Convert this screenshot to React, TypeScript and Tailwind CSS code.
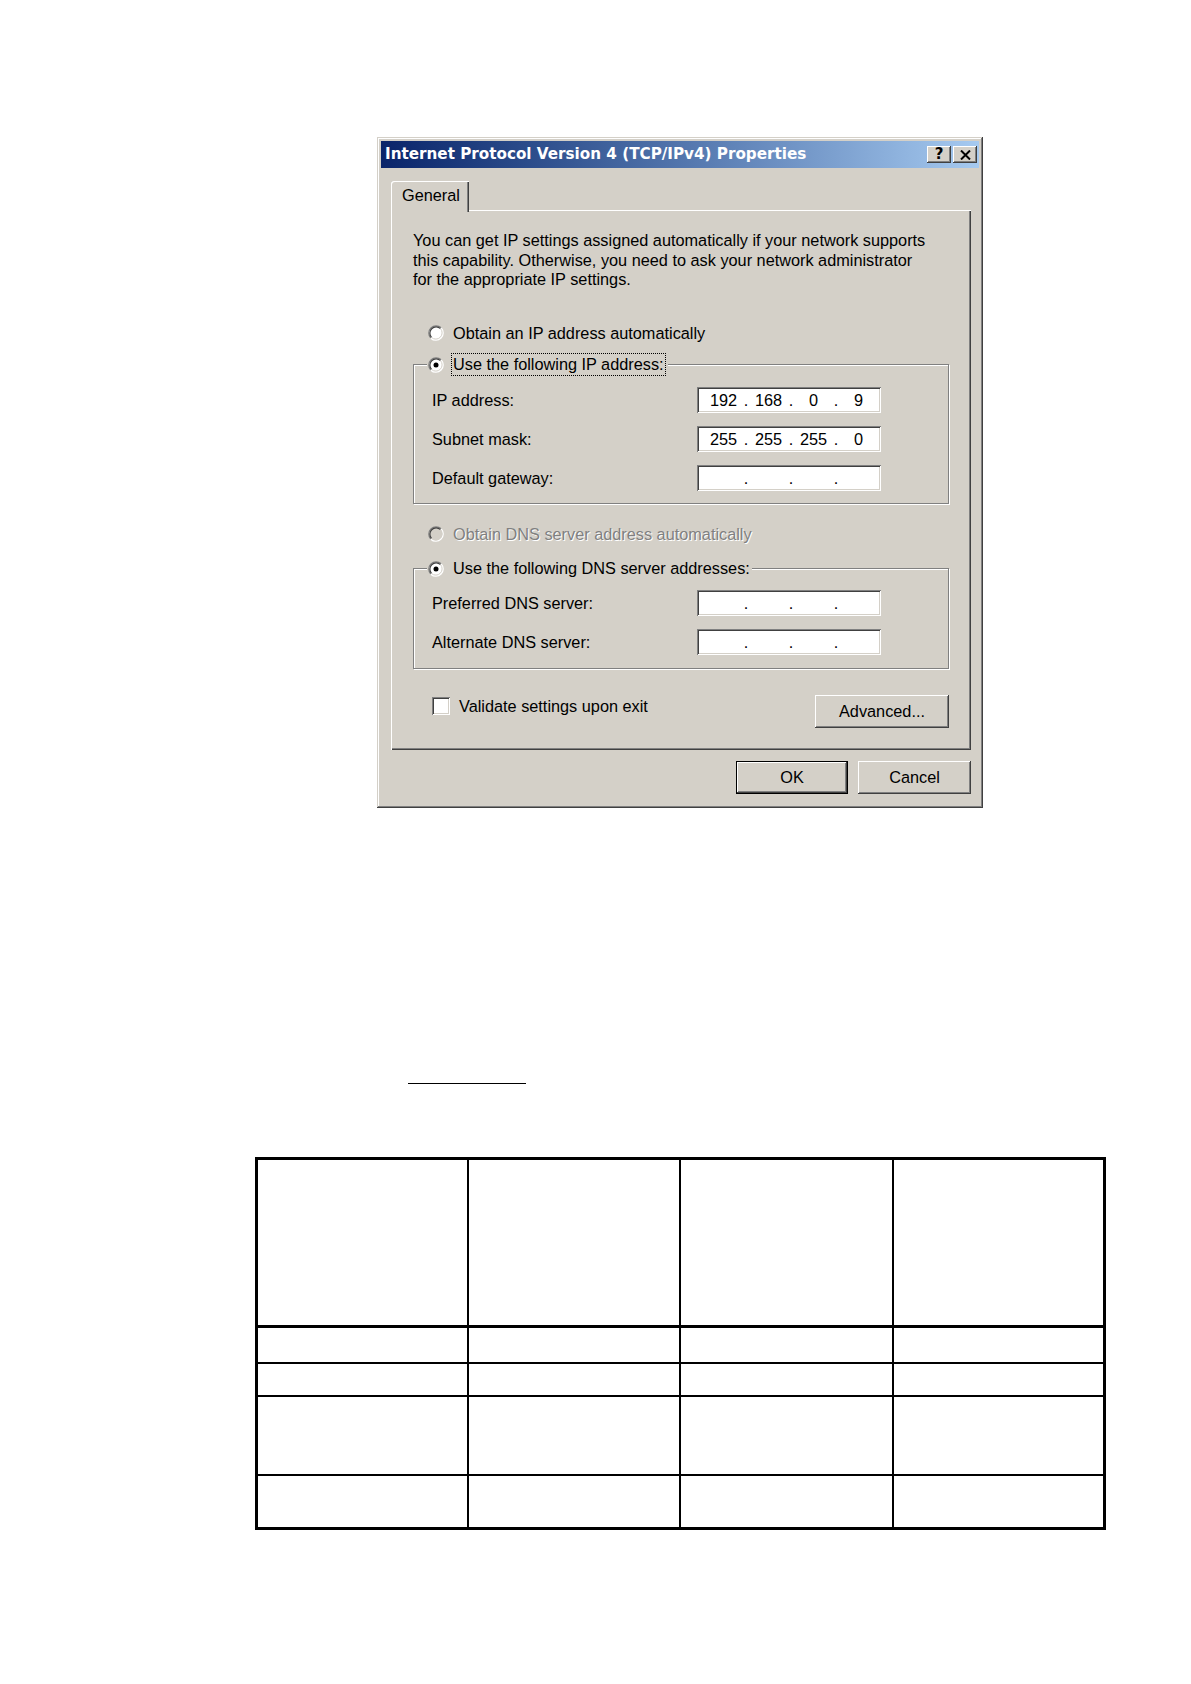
import { Fragment } from "react";

const raised =
  "bg-[#d4d0c8] shadow-[inset_-1px_-1px_#404040,inset_1px_1px_#ffffff,inset_-2px_-2px_#808080,inset_2px_2px_#d4d0c8]";
const sunken =
  "bg-white shadow-[inset_1px_1px_#808080,inset_-1px_-1px_#ffffff,inset_2px_2px_#404040,inset_-2px_-2px_#d4d0c8]";

function Radio({ checked, disabled }: { checked?: boolean; disabled?: boolean }) {
  return (
    <svg width="16" height="16" viewBox="0 0 16 16" className="shrink-0">
      <circle cx="8" cy="8" r="7" fill={disabled ? "#d4d0c8" : "#ffffff"} />
      <path d="M13.16 2.84A7.3 7.3 0 0 0 2.84 13.16" fill="none" stroke="#808080" strokeWidth="1.3" />
      <path d="M12.45 3.55A6.3 6.3 0 0 0 3.55 12.45" fill="none" stroke="#404040" strokeWidth="1.1" />
      <path d="M2.84 13.16A7.3 7.3 0 0 0 13.16 2.84" fill="none" stroke="#ffffff" strokeWidth="1.3" />
      <path d="M3.55 12.45A6.3 6.3 0 0 0 12.45 3.55" fill="none" stroke="#d4d0c8" strokeWidth="1" />
      {checked && <circle cx="8" cy="8" r="2.5" fill="#000000" />}
    </svg>
  );
}

function IpField({ parts }: { parts?: string[] }) {
  const p = parts ?? ["", "", "", ""];
  return (
    <div className={`flex h-[26px] w-[184px] items-center pl-[10px] ${sunken}`}>
      {p.map((v, i) => (
        <Fragment key={i}>
          <span className="w-[33px] text-center">{v}</span>
          {i < 3 && <span className="w-[12px] text-center">.</span>}
        </Fragment>
      ))}
    </div>
  );
}

function FieldRow({ label, parts }: { label: string; parts?: string[] }) {
  return (
    <div className="flex h-[26px] items-center">
      <span className="w-[265px]">{label}</span>
      <IpField parts={parts} />
    </div>
  );
}

function GroupBox({ legend, children, className }: { legend: React.ReactNode; children: React.ReactNode; className: string }) {
  return (
    <div className={`relative border border-[#808080] shadow-[inset_1px_1px_#ffffff,1px_1px_#ffffff] ${className}`}>
      <div className="absolute -top-[12px] left-[13px] flex h-[23px] items-center bg-[#d4d0c8] pl-[1px] pr-[2px]">
        {legend}
      </div>
      {children}
    </div>
  );
}

export default function App() {
  return (
    <div className="h-[1684px] w-[1191px] overflow-hidden bg-white font-['Liberation_Sans',Arial,sans-serif] text-[16.3px] text-black">
      {/* dialog */}
      <div className="ml-[377px] mt-[137px] flex h-[671px] w-[606px] flex-col bg-[#d4d0c8] px-[4px] pt-[4px] shadow-[inset_-1px_-1px_#404040,inset_1px_1px_#d4d0c8,inset_-2px_-2px_#808080,inset_2px_2px_#ffffff]">
        <div className="flex h-[27px] items-center justify-between bg-linear-to-r from-[#0a246a] to-[#a6caf0] pl-[4px] pr-[2px]">
          <span className="font-['DejaVu_Sans',sans-serif] text-[15.2px] font-bold text-white">
            Internet Protocol Version 4 (TCP/IPv4) Properties
          </span>
          <div className="flex gap-[2px]">
            <div className={`flex h-[17px] w-[24px] items-center justify-center pb-[1px] font-['DejaVu_Sans',sans-serif] text-[15px] font-bold leading-none ${raised}`}>
              ?
            </div>
            <div className={`flex h-[17px] w-[24px] items-center justify-center ${raised}`}>
              <svg width="11" height="10" viewBox="0 0 11 10">
                <path d="M1 0.5L10 9.5M10 0.5L1 9.5" stroke="#000000" strokeWidth="2" />
              </svg>
            </div>
          </div>
        </div>

        <div className="flex flex-col pl-[10px] pr-[8px] pt-[13px]">
          <div className="relative z-10 -mb-[2px] h-[31px] w-[78px] rounded-tl-[3px] bg-[#d4d0c8] pl-[11px] pt-[5px] leading-[19px] shadow-[inset_1px_1px_#ffffff,inset_-1px_0_#404040,inset_-2px_0_#808080]">
            General
          </div>

          <div className="flex h-[540px] w-[580px] flex-col bg-[#d4d0c8] px-[22px] pt-[21px] shadow-[inset_1px_1px_#ffffff,inset_-1px_-1px_#404040,inset_-2px_-2px_#808080]">
            <p className="leading-[19.5px]">
              You can get IP settings assigned automatically if your network supports
              <br />
              this capability. Otherwise, you need to ask your network administrator
              <br />
              for the appropriate IP settings.
            </p>

            <div className="mt-[32px] flex h-[23px] items-center gap-[9px] pl-[15px]">
              <Radio />
              <span>Obtain an IP address automatically</span>
            </div>

            <GroupBox
              className="mt-[19.5px] flex flex-col gap-[13px] pb-[12px] pl-[18px] pt-[22px]"
              legend={
                <div className="flex items-center gap-[7px]">
                  <Radio checked />
                  <span className="border border-dotted border-black pl-[1px] pr-[1px] leading-[21px]">
                    Use the following IP address:
                  </span>
                </div>
              }
            >
              <FieldRow label="IP address:" parts={["192", "168", "0", "9"]} />
              <FieldRow label="Subnet mask:" parts={["255", "255", "255", "0"]} />
              <FieldRow label="Default gateway:" />
            </GroupBox>

            <div className="mt-[18.5px] flex h-[23px] items-center gap-[9px] pl-[15px]">
              <Radio disabled />
              <span className="text-[#808080] [text-shadow:1px_1px_0_#ffffff]">
                Obtain DNS server address automatically
              </span>
            </div>

            <GroupBox
              className="mt-[22.5px] flex flex-col gap-[13px] pb-[13px] pl-[18px] pt-[21px]"
              legend={
                <div className="flex items-center gap-[9px]">
                  <Radio checked />
                  <span>Use the following DNS server addresses:</span>
                </div>
              }
            >
              <FieldRow label="Preferred DNS server:" />
              <FieldRow label="Alternate DNS server:" />
            </GroupBox>

            <div className="mt-[26px] flex items-start justify-between">
              <div className="mt-[2px] flex h-[18px] items-center gap-[9px] pl-[19px]">
                <div className={`h-[18px] w-[18px] ${sunken}`} />
                <span>Validate settings upon exit</span>
              </div>
              <div className={`flex h-[33px] w-[134px] items-center justify-center ${raised}`}>
                Advanced...
              </div>
            </div>
          </div>

          <div className="mt-[11px] flex justify-end gap-[10px]">
            <div className={`flex h-[33px] w-[112px] items-center justify-center border border-black ${raised}`}>
              OK
            </div>
            <div className={`flex h-[33px] w-[113px] items-center justify-center ${raised}`}>
              Cancel
            </div>
          </div>
        </div>
      </div>

      {/* blank line */}
      <div className="ml-[408px] mt-[275px] h-[1px] w-[118px] bg-black" />

      {/* empty table */}
      <div className="ml-[255px] mt-[73px] w-[851px] border-[3px] border-black">
        <div className="grid h-[168px] grid-cols-[209px_212px_213px_211px] border-b-[3px] border-black">
          <div />
          <div className="border-l-2 border-black" />
          <div className="border-l-2 border-black" />
          <div className="border-l-2 border-black" />
        </div>
        {[34, 33, 79, 53].map((h, r) => (
          <div
            key={r}
            className={`grid grid-cols-[209px_212px_213px_211px] ${r > 0 ? "border-t-2 border-black" : ""}`}
            style={{ height: h }}
          >
            <div />
            <div className="border-l-2 border-black" />
            <div className="border-l-2 border-black" />
            <div className="border-l-2 border-black" />
          </div>
        ))}
      </div>
    </div>
  );
}
